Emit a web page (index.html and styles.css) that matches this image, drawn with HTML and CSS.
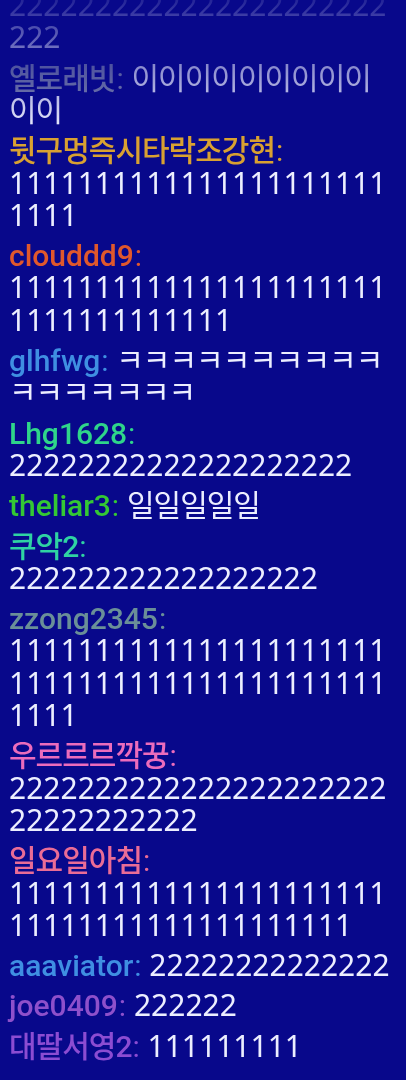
FILE: index.html
```html
<!DOCTYPE html>
<html lang="ko">
<head>
<meta charset="utf-8">
<title>Chat</title>
<link rel="stylesheet" href="styles.css">
</head>
<body>
<div class="chat">
  <p class="msg"><span class="name gray ko">하늘보리<span class="colon">:</span></span> <span class="text">22222222222222222222222222222222222222222222222</span></p>
  <p class="msg"><span class="name gray ko">옐로래빗<span class="colon">:</span></span> <span class="text ko">이이이이이이이이이이이</span></p>
  <p class="msg"><span class="name gold ko">뒷구멍즉시타락조강현<span class="colon">:</span></span> <span class="text">11111111111111111111111111</span></p>
  <p class="msg"><span class="name orange">clouddd9<span class="colon">:</span></span> <span class="text">11111111111111111111111111111111111</span></p>
  <p class="msg"><span class="name blue">glhfwg<span class="colon">:</span></span> <span class="text ko">ㅋㅋㅋㅋㅋㅋㅋㅋㅋㅋㅋㅋㅋㅋㅋㅋㅋ</span></p>
  <p class="msg"><span class="name spring">Lhg1628<span class="colon">:</span></span> <span class="text">22222222222222222222</span></p>
  <p class="msg"><span class="name green">theliar3<span class="colon">:</span></span> <span class="text ko">일일일일일</span></p>
  <p class="msg"><span class="name teal ko">쿠악2<span class="colon">:</span></span> <span class="text">222222222222222222</span></p>
  <p class="msg"><span class="name cadet">zzong2345<span class="colon">:</span></span> <span class="text">111111111111111111111111111111111111111111111111</span></p>
  <p class="msg"><span class="name hotpink ko">우르르르깍꿍<span class="colon">:</span></span> <span class="text">222222222222222222222222222222222</span></p>
  <p class="msg"><span class="name pink ko">일요일아침<span class="colon">:</span></span> <span class="text">111111111111111111111111111111111111111111</span></p>
  <p class="msg"><span class="name blue">aaaviator<span class="colon">:</span></span> <span class="text">22222222222222</span></p>
  <p class="msg"><span class="name violet">joe0409<span class="colon">:</span></span> <span class="text">222222</span></p>
  <p class="msg"><span class="name purple ko">대딸서영2<span class="colon">:</span></span> <span class="text">111111111</span></p>
</div>
</body>
</html>
```
FILE: styles.css
```css
html, body {
  margin: 0;
  padding: 0;
  background: #08088b;
}

body {
  font-family: "Noto Sans", "Noto Sans CJK KR", sans-serif;
  font-size: 30px;
  line-height: 32.3px;
  color: #eceeff;
}

.chat {
  height: 1080px;
  box-sizing: border-box;
  padding: 0 12px 18px 9px;
  display: flex;
  flex-direction: column;
  justify-content: flex-end;
  gap: 8px;
  overflow: hidden;
  -webkit-mask-image: linear-gradient(to bottom, rgba(0,0,0,0.12) 0px, #000 130px);
  mask-image: linear-gradient(to bottom, rgba(0,0,0,0.12) 0px, #000 130px);
}

.msg {
  margin: 0;
  flex-shrink: 0;
  overflow-wrap: break-word;
}

.name {
  font-family: Roboto, "Noto Sans CJK KR", sans-serif;
  font-weight: 500;
  line-height: 29px;
}

.colon {
  font-weight: 400;
  letter-spacing: 0;
  margin-left: 1px;
}

.ko {
  letter-spacing: -1px;
}

.gray { color: #858db0; }
.gold { color: #d9a131; }
.orange { color: #e0582c; }
.blue { color: #3f8fe2; }
.spring { color: #2fd58a; }
.green { color: #34c834; }
.teal { color: #2fd3a3; }
.cadet { color: #6a8f98; }
.hotpink { color: #ec6cbc; }
.pink { color: #ea6c96; }
.violet { color: #8e50cb; }
.purple { color: #8c4cd2; }
```
